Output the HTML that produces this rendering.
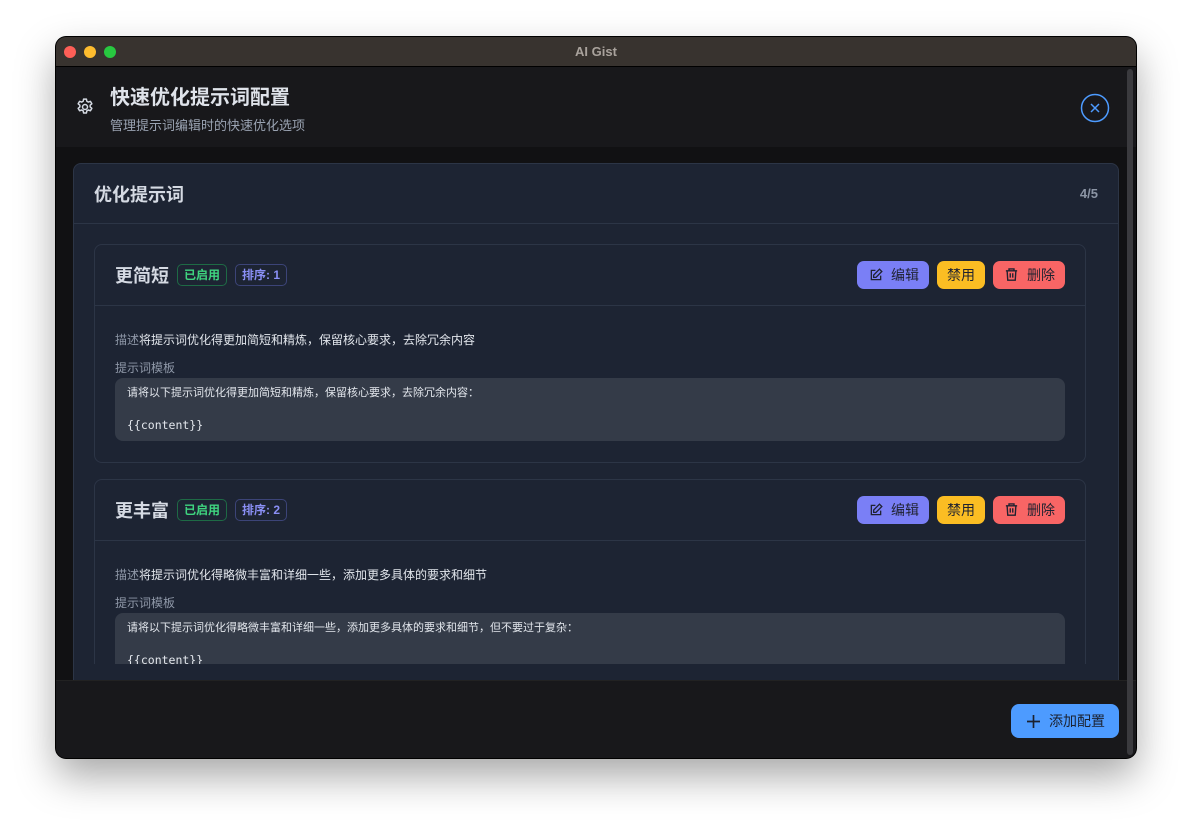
<!DOCTYPE html><html><head><meta charset="utf-8"><style>
*{box-sizing:border-box;margin:0;padding:0}
body{width:1192px;height:832px;background:#fff;font-family:"Liberation Sans","Noto Sans CJK SC",sans-serif;position:relative;overflow:hidden}
.win{position:absolute;left:56px;top:37px;width:1080px;height:721px;border-radius:10px;background:#111113;box-shadow:0 18px 40px rgba(0,0,0,.35),0 0 0 1px #000;overflow:hidden}
.tb{height:30px;background:#38332f;border-bottom:1px solid #000;text-align:center;color:#a9a29c;font-size:13px;font-weight:bold;line-height:30px;position:relative}
.dot{position:absolute;top:9px;width:12px;height:12px;border-radius:50%}
.hdr{position:absolute;top:30px;left:0;right:0;height:80px;background:#18181b}
.ttl{position:absolute;left:54px;top:14px;color:#dfe3ea;font-size:20px;font-weight:bold}
.sub{position:absolute;left:54px;top:48px;color:#9aa3b2;font-size:13px}
.foot{position:absolute;top:643px;left:0;right:0;height:78px;background:#18181b;border-top:1px solid #222}
.add{position:absolute;right:17px;top:23px;width:108px;height:34px;border-radius:8px;background:#4d9bff;color:#1b2230;font-size:14px;line-height:34px;padding-left:38px}
.sb{position:absolute;right:3px;top:32px;width:6px;height:686px;background:#3a3a3e;border-radius:3px}
.outer{position:absolute;left:17px;top:126px;width:1046px;height:530px;background:#1d2433;border:1px solid #2c3546;border-radius:8px;overflow:hidden}
.oh{height:60px;border-bottom:1px solid #2c3546;position:relative}
.oh b{position:absolute;left:20px;top:17px;color:#d5dae3;font-size:18px}
.oh i{position:absolute;right:20px;top:22px;color:#8c95a5;font-size:13px;font-style:normal;font-weight:bold}
.clip{position:absolute;left:0;top:60px;width:1046px;height:440px;overflow:hidden}
.card{position:absolute;left:20px;width:992px;border:1px solid #2c3546;border-radius:8px}
.ch{height:61px;border-bottom:1px solid #2c3546;position:relative}
.cn{position:absolute;left:20px;top:17px;color:#d5dae3;font-size:18px;font-weight:bold}
.tag{position:absolute;top:19px;height:22px;border-radius:5px;font-size:12px;font-weight:bold;line-height:20px;padding:0 6px}
.g{left:82px;border:1px solid #1e6a45;color:#3fd47f}
.p{left:140px;border:1px solid #3c4478;color:#8a8ff5}
.btn{position:absolute;top:16px;height:28px;border-radius:7px;font-size:14px;line-height:28px;color:#1f2230}
.desc{position:absolute;left:20px;top:86px;font-size:12px;color:#e2e6ec}
.desc span{color:#8f98a8}
.lbl{position:absolute;left:20px;top:114px;font-size:12px;color:#8f98a8}
.ta{position:absolute;left:20px;top:133px;width:950px;height:63px;background:#343b48;border-radius:8px;color:#e2e6ec;font-size:11px;padding:7px 12px;line-height:16px}
.ta code{font-family:"DejaVu Sans Mono",monospace;font-size:11.5px}
</style></head><body>
<div class="win">
<div class="tb"><div class="dot" style="left:8px;background:#fe5f57"></div><div class="dot" style="left:28px;background:#febc2e"></div><div class="dot" style="left:48px;background:#28c840"></div>AI Gist</div>
<div class="hdr">
<svg style="position:absolute;left:19px;top:30px" width="20" height="20" viewBox="0 0 24 24" fill="none" stroke="#d5dae3" stroke-width="1.8" stroke-linejoin="round"><circle cx="12" cy="12" r="3"/><path d="M10.3 2.5h3.4l.5 2.6 1.8 1 2.5-.9 1.7 2.9-2 1.7v2.1l2 1.7-1.7 2.9-2.5-.9-1.8 1-.5 2.6h-3.4l-.5-2.6-1.8-1-2.5.9-1.7-2.9 2-1.7v-2.1l-2-1.7 1.7-2.9 2.5.9 1.8-1z"/></svg>
<div class="ttl">快速优化提示词配置</div><div class="sub">管理提示词编辑时的快速优化选项</div>
<svg style="position:absolute;left:1024px;top:26px" width="30" height="30" viewBox="0 0 30 30" fill="none" stroke="#4d9bff" stroke-width="1.5"><circle cx="15" cy="15" r="13.5"/><path d="M11 11l8 8M19 11l-8 8"/></svg>
</div>
<div class="outer">
<div class="oh"><b>优化提示词</b><i>4/5</i></div>
<div class="clip">
<div class="card" style="top:20px;height:219px">
<div class="ch"><div class="cn">更简短</div><div class="tag g">已启用</div><div class="tag p">排序: 1</div>
<div class="btn" style="left:762px;width:72px;background:#7a7ff6;padding-left:34px">编辑<svg style="position:absolute;left:12px;top:7px" width="14" height="14" viewBox="0 0 24 24" fill="none" stroke="#1f2230" stroke-width="2.2"><path d="M11 4H4v16h16v-7"/><path d="M18 2l4 4-10 10H8v-4z"/></svg></div>
<div class="btn" style="left:842px;width:48px;background:#fbbd23;text-align:center">禁用</div>
<div class="btn" style="left:898px;width:72px;background:#f86565;padding-left:34px">删除<svg style="position:absolute;left:11px;top:6px" width="15" height="15" viewBox="0 0 24 24" fill="none" stroke="#1f2230" stroke-width="2.2"><path d="M3 6h18M8 6V3h8v3M5 6l1 15h12l1-15M10 10v7M14 10v7"/></svg></div></div>
<div class="desc"><span>描述</span>将提示词优化得更加简短和精炼，保留核心要求，去除冗余内容</div>
<div class="lbl">提示词模板</div>
<div class="ta">请将以下提示词优化得更加简短和精炼，保留核心要求，去除冗余内容：<br><br><code>{{content}}</code></div>
</div>
<div class="card" style="top:255px;height:260px">
<div class="ch"><div class="cn">更丰富</div><div class="tag g">已启用</div><div class="tag p">排序: 2</div>
<div class="btn" style="left:762px;width:72px;background:#7a7ff6;padding-left:34px">编辑<svg style="position:absolute;left:12px;top:7px" width="14" height="14" viewBox="0 0 24 24" fill="none" stroke="#1f2230" stroke-width="2.2"><path d="M11 4H4v16h16v-7"/><path d="M18 2l4 4-10 10H8v-4z"/></svg></div>
<div class="btn" style="left:842px;width:48px;background:#fbbd23;text-align:center">禁用</div>
<div class="btn" style="left:898px;width:72px;background:#f86565;padding-left:34px">删除<svg style="position:absolute;left:11px;top:6px" width="15" height="15" viewBox="0 0 24 24" fill="none" stroke="#1f2230" stroke-width="2.2"><path d="M3 6h18M8 6V3h8v3M5 6l1 15h12l1-15M10 10v7M14 10v7"/></svg></div></div>
<div class="desc"><span>描述</span>将提示词优化得略微丰富和详细一些，添加更多具体的要求和细节</div>
<div class="lbl">提示词模板</div>
<div class="ta">请将以下提示词优化得略微丰富和详细一些，添加更多具体的要求和细节，但不要过于复杂：<br><br><code>{{content}}</code></div>
</div>
</div>
</div>
<div class="foot"><div class="add"><svg style="position:absolute;left:16px;top:11px" width="13" height="13" viewBox="0 0 14 14" stroke="#1b2230" stroke-width="1.8"><path d="M7 0v14M0 7h14"/></svg>添加配置</div></div>
<div class="sb"></div>
</div>
</body></html>
